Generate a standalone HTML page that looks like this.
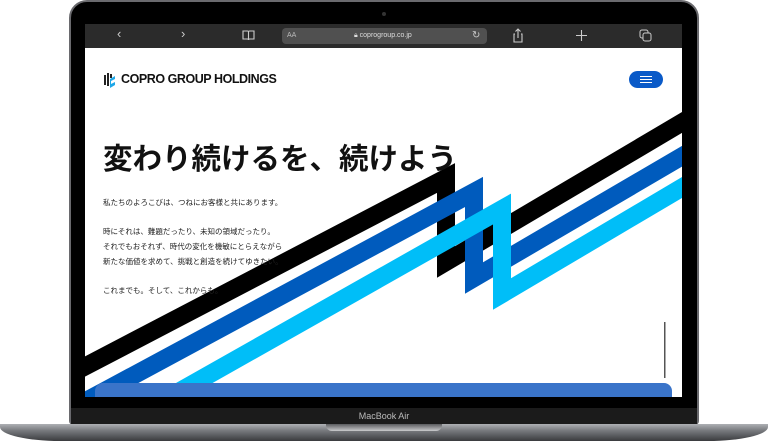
<!DOCTYPE html>
<html><head><meta charset="utf-8"><style>
*{margin:0;padding:0;box-sizing:border-box}
body{width:768px;height:441px;background:#fff;position:relative;overflow:hidden;font-family:"Liberation Sans","Noto Sans CJK JP",sans-serif}
.bezel{position:absolute;left:69px;top:0;width:630px;height:425px;background:#000;border-radius:18px 18px 4px 4px;border:2px solid #6a6a6e}
.chin{position:absolute;left:71px;top:408px;width:626px;height:16px;background:#1b1b1b;color:#bbb;font-size:9px;text-align:center;line-height:16px}
.base{position:absolute;left:0;top:424px;width:768px;height:17px;background:linear-gradient(#aeb0b4,#76787c 40%,#3a3b3e);border-radius:0 0 60px 60px/0 0 14px 14px}
.notch{position:absolute;left:326px;top:424px;width:116px;height:7px;background:linear-gradient(#5a5b5e,#c9cacc);border-radius:0 0 6px 6px}
.bar{position:absolute;left:85px;top:24px;width:597px;height:24px;background:#2b2b2b;color:#ccc}
.url{position:absolute;left:197px;top:4px;width:205px;height:16px;background:#505050;border-radius:4px;font-size:7px;line-height:16px}
.screen{position:absolute;left:85px;top:48px;width:597px;height:349px;background:#fff;overflow:hidden}
.ic{position:absolute;top:4px;font-size:13px;color:#ccc}
</style></head><body>
<div class="bezel"></div>
<div style="position:absolute;left:382px;top:12px;width:4px;height:4px;border-radius:50%;background:#333"></div>
<div class="bar">
<span class="ic" style="left:32px;top:2px">‹</span>
<span class="ic" style="left:96px;top:2px">›</span>
<svg style="position:absolute;left:157px;top:6px" width="13" height="11"><path d="M1 1h4.5a1 1 0 0 1 1 1v8a1 1 0 0 0-1-1H1zM12 1H7.5a1 1 0 0 0-1 1v8a1 1 0 0 1 1-1H12z" fill="none" stroke="#ccc" stroke-width="1.1"/></svg>
<div class="url"><span style="position:absolute;left:5px;color:#bbb">AA</span><span style="position:absolute;left:72px;color:#ddd">🔒︎ coprogroup.co.jp</span><span style="position:absolute;left:190px;font-size:10px">↻</span></div>
<svg style="position:absolute;left:427px;top:4px" width="12" height="15"><path d="M3 6H2v8h8V6H9M6 10V1M3.5 3.5L6 1l2.5 2.5" fill="none" stroke="#ccc" stroke-width="1.1"/></svg>
<svg style="position:absolute;left:491px;top:6px" width="11" height="11"><path d="M5.5 0v11M0 5.5h11" stroke="#ccc" stroke-width="1.1"/></svg>
<svg style="position:absolute;left:554px;top:5px" width="13" height="13"><rect x="1" y="1" width="8" height="8" rx="2" fill="none" stroke="#ccc"/><rect x="4" y="4" width="8" height="8" rx="2" fill="#2b2b2b" stroke="#ccc"/></svg>
</div>
<div class="screen">
<svg style="position:absolute;left:0;top:0" width="597" height="349" viewBox="85 48 597 349">
<g fill="none" stroke-width="18" stroke-linejoin="miter" stroke-miterlimit="10">
<polyline stroke="#000" points="40,390 446,178 446,262 720,100"/>
<polyline stroke="#005bbd" points="60,415 474,192 474,278 720,134"/>
<polyline stroke="#00bef8" points="120,425 502,209 502,294 720,165"/>
</g>
<rect x="664" y="322" width="1.5" height="56" fill="#555"/>
</svg>
<svg style="position:absolute;left:18px;top:24px" width="14" height="16" viewBox="0 0 14 16"><path d="M2 3v10M5 1v13M8 2v4" stroke="#222" stroke-width="2"/><path d="M7 7l5-3v3l-4 2v3l4-2v3l-5 3z" fill="#1ea7e8"/></svg>
<div style="position:absolute;left:36px;top:24px;font-size:12.5px;font-weight:bold;color:#111;letter-spacing:-0.45px">COPRO GROUP HOLDINGS</div>
<div style="position:absolute;left:544px;top:23px;width:34px;height:17px;background:#0a5ac8;border-radius:9px"><div style="position:absolute;left:11px;top:5px;width:12px;height:7px;border-top:1.2px solid #fff;border-bottom:1.2px solid #fff"></div><div style="position:absolute;left:11px;top:8px;width:12px;height:1.2px;background:#fff"></div></div>
<div style="position:absolute;left:18px;top:88px;font-size:29.5px;font-weight:bold;color:#111;white-space:nowrap">変わり続けるを、続けよう</div>
<div style="position:absolute;left:18px;top:148px;font-size:7.5px;color:#222;line-height:14.7px;white-space:nowrap">私たちのよろこびは、つねにお客様と共にあります。<br><br>時にそれは、難題だったり、未知の領域だったり。<br>それでもおそれず、時代の変化を機敏にとらえながら<br>新たな価値を求めて、挑戦と創造を続けてゆきたい。<br><br>これまでも。そして、これからも。</div>
<div style="position:absolute;left:10px;top:335px;width:577px;height:20px;background:#3a74c9;border-radius:8px 8px 0 0"></div>
</div>
<div class="chin">MacBook Air</div>
<div class="base"></div>
<div class="notch"></div>
</body></html>
